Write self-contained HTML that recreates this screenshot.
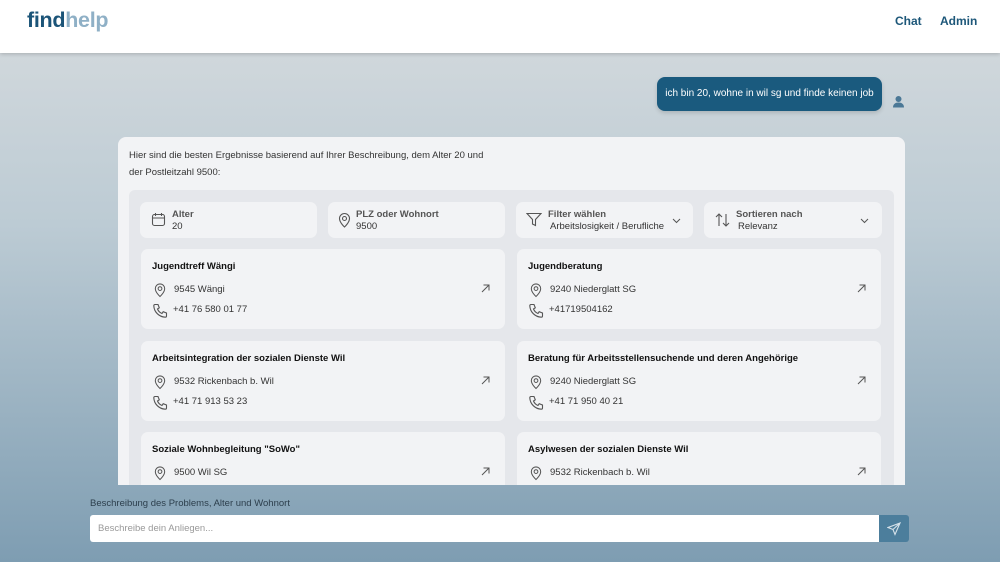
<!DOCTYPE html>
<html><head><meta charset="utf-8"><style>
*{box-sizing:border-box;margin:0;padding:0}
body{width:1000px;height:562px;overflow:hidden;font-family:"Liberation Sans",sans-serif;background:linear-gradient(#d6dbde 0%,#bccbd4 40%,#7e9db2 100%);position:relative}
.hdr{position:absolute;left:0;top:0;width:1000px;height:53px;background:#fff;box-shadow:0 1px 4px rgba(0,0,0,.2)}
.logo{position:absolute;left:27px;top:8px;font-size:21.5px;font-weight:bold;letter-spacing:-.3px}
.nav{position:absolute;top:14px;font-size:12px;font-weight:bold;color:#1d5779}
.bubble{position:absolute;left:657px;top:77px;width:225px;height:34px;background:#1a5a7e;border-radius:8px;color:#fff;font-size:10px;line-height:34px;text-align:center;box-shadow:0 2px 4px rgba(0,0,0,.15)}
.panel{position:absolute;left:118px;top:137px;width:787px;height:348px;background:#f2f3f5;border-radius:8px 8px 0 0;overflow:hidden}
.intro{position:absolute;left:11px;top:10px;font-size:9.5px;line-height:17px;color:#333}
.inner{position:absolute;left:11px;top:53px;width:765px;height:300px;background:#e5e7eb;border-radius:6px}
.f{position:absolute;top:12px;height:36px;background:#f2f3f5;border-radius:7px}
.f .l{position:absolute;left:32px;top:7px;font-size:9.5px;font-weight:bold;color:#555}
.f .v{position:absolute;left:32px;top:19px;font-size:9.5px;color:#333}
.f svg{position:absolute}
.c{position:absolute;width:364px;height:80px;background:#f2f3f5;border-radius:7px}
.c .t{position:absolute;left:11px;top:12px;font-size:9.5px;font-weight:bold;color:#111}
.c .a{position:absolute;left:33px;top:35px;font-size:9.5px;color:#333}
.c .p{position:absolute;left:32px;top:55px;font-size:9.5px;color:#333}
.c svg{position:absolute}
.lbl{position:absolute;left:90px;top:498px;font-size:9.5px;color:#2c3e4c}
.inp{position:absolute;left:90px;top:515px;width:789px;height:27px;background:#fff;border-radius:3px 0 0 3px;font-size:9.5px;color:#999;padding:8px 8px}
.send{position:absolute;left:879px;top:515px;width:30px;height:27px;background:#4c7e9c;border-radius:0 3px 3px 0}
</style></head><body>
<div class="hdr">
<div class="logo"><span style="color:#1b5478">find</span><span style="color:#8fb0c6">help</span></div>
<div class="nav" style="left:895px">Chat</div>
<div class="nav" style="left:940px">Admin</div>
</div>
<div class="bubble">ich bin 20, wohne in wil sg und finde keinen job</div>
<svg style="position:absolute;left:892px;top:95px" width="13" height="13" viewBox="0 0 13 13"><circle cx="6.5" cy="4" r="3" fill="#4b7896"/><path d="M1 12.5c0-3.5 2.5-5 5.5-5s5.5 1.5 5.5 5z" fill="#4b7896"/></svg>
<div class="panel">
<div class="intro">Hier sind die besten Ergebnisse basierend auf Ihrer Beschreibung, dem Alter 20 und<br>der Postleitzahl 9500:</div>
<div class="inner">
<div class="f" style="left:11px;width:177px"><svg style="left:11px;top:10px" width="15" height="15" viewBox="0 0 15 15" fill="none" stroke="#555" stroke-width="1.1"><rect x="1.5" y="2.5" width="12" height="11" rx="2"/><path d="M1.5 6h12M4.5 1v3M10.5 1v3"/></svg><div class="l">Alter</div><div class="v">20</div></div>
<div class="f" style="left:199px;width:177px"><svg style="left:9px;top:10px" width="15" height="16" viewBox="0 0 15 16" fill="none" stroke="#555" stroke-width="1.1"><path d="M7.5 15s5-4.5 5-8.5a5 5 0 0 0-10 0c0 4 5 8.5 5 8.5z"/><circle cx="7.5" cy="6.5" r="2"/></svg><div class="l" style="left:28px">PLZ oder Wohnort</div><div class="v" style="left:28px">9500</div></div>
<div class="f" style="left:387px;width:177px"><svg style="left:10px;top:10px" width="16" height="15" viewBox="0 0 16 15" fill="none" stroke="#555" stroke-width="1.1"><path d="M1 1.5h14l-5.5 6v6l-3-1.5v-4.5z"/></svg><div class="l">Filter wählen</div><div class="v" style="left:34px">Arbeitslosigkeit / Berufliche</div><svg style="left:156px;top:16px" width="9" height="6" viewBox="0 0 9 6" fill="none" stroke="#555"><path d="M1 1l3.5 3.5L8 1"/></svg></div>
<div class="f" style="left:575px;width:178px"><svg style="left:11px;top:11px" width="15" height="14" viewBox="0 0 15 14" fill="none" stroke="#555" stroke-width="1.1"><path d="M4 13V1M1 4l3-3 3 3M11 1v12M8 10l3 3 3-3"/></svg><div class="l">Sortieren nach</div><div class="v" style="left:34px">Relevanz</div><svg style="left:156px;top:16px" width="9" height="6" viewBox="0 0 9 6" fill="none" stroke="#555"><path d="M1 1l3.5 3.5L8 1"/></svg></div>

<div class="c" style="left:12px;top:59px"><div class="t">Jugendtreff Wängi</div><svg style="left:12px;top:33px" width="14" height="16" viewBox="0 0 15 16" fill="none" stroke="#555" stroke-width="1.1"><path d="M7.5 15s5-4.5 5-8.5a5 5 0 0 0-10 0c0 4 5 8.5 5 8.5z"/><circle cx="7.5" cy="6.5" r="2"/></svg><div class="a">9545 Wängi</div><svg style="left:12px;top:54px" width="15" height="15" viewBox="0 0 15 15" fill="none" stroke="#555" stroke-width="1.1"><path d="M2 1.5h3l1.3 3.3-1.8 1.2a8 8 0 0 0 4.5 4.5l1.2-1.8 3.3 1.3v3c0 .7-.6 1.2-1.3 1.2A12 12 0 0 1 .8 2.8c0-.7.5-1.3 1.2-1.3z"/></svg><div class="p">+41 76 580 01 77</div><svg style="left:340px;top:35px" width="9" height="9" viewBox="0 0 9 9" fill="none" stroke="#555"><path d="M1 8l7-7M2.5 1H8v5.5"/></svg></div>
<div class="c" style="left:388px;top:59px"><div class="t">Jugendberatung</div><svg style="left:12px;top:33px" width="14" height="16" viewBox="0 0 15 16" fill="none" stroke="#555" stroke-width="1.1"><path d="M7.5 15s5-4.5 5-8.5a5 5 0 0 0-10 0c0 4 5 8.5 5 8.5z"/><circle cx="7.5" cy="6.5" r="2"/></svg><div class="a">9240 Niederglatt SG</div><svg style="left:12px;top:54px" width="15" height="15" viewBox="0 0 15 15" fill="none" stroke="#555" stroke-width="1.1"><path d="M2 1.5h3l1.3 3.3-1.8 1.2a8 8 0 0 0 4.5 4.5l1.2-1.8 3.3 1.3v3c0 .7-.6 1.2-1.3 1.2A12 12 0 0 1 .8 2.8c0-.7.5-1.3 1.2-1.3z"/></svg><div class="p">+41719504162</div><svg style="left:340px;top:35px" width="9" height="9" viewBox="0 0 9 9" fill="none" stroke="#555"><path d="M1 8l7-7M2.5 1H8v5.5"/></svg></div>

<div class="c" style="left:12px;top:151px"><div class="t">Arbeitsintegration der sozialen Dienste Wil</div><svg style="left:12px;top:33px" width="14" height="16" viewBox="0 0 15 16" fill="none" stroke="#555" stroke-width="1.1"><path d="M7.5 15s5-4.5 5-8.5a5 5 0 0 0-10 0c0 4 5 8.5 5 8.5z"/><circle cx="7.5" cy="6.5" r="2"/></svg><div class="a">9532 Rickenbach b. Wil</div><svg style="left:12px;top:54px" width="15" height="15" viewBox="0 0 15 15" fill="none" stroke="#555" stroke-width="1.1"><path d="M2 1.5h3l1.3 3.3-1.8 1.2a8 8 0 0 0 4.5 4.5l1.2-1.8 3.3 1.3v3c0 .7-.6 1.2-1.3 1.2A12 12 0 0 1 .8 2.8c0-.7.5-1.3 1.2-1.3z"/></svg><div class="p">+41 71 913 53 23</div><svg style="left:340px;top:35px" width="9" height="9" viewBox="0 0 9 9" fill="none" stroke="#555"><path d="M1 8l7-7M2.5 1H8v5.5"/></svg></div>
<div class="c" style="left:388px;top:151px"><div class="t">Beratung für Arbeitsstellensuchende und deren Angehörige</div><svg style="left:12px;top:33px" width="14" height="16" viewBox="0 0 15 16" fill="none" stroke="#555" stroke-width="1.1"><path d="M7.5 15s5-4.5 5-8.5a5 5 0 0 0-10 0c0 4 5 8.5 5 8.5z"/><circle cx="7.5" cy="6.5" r="2"/></svg><div class="a">9240 Niederglatt SG</div><svg style="left:12px;top:54px" width="15" height="15" viewBox="0 0 15 15" fill="none" stroke="#555" stroke-width="1.1"><path d="M2 1.5h3l1.3 3.3-1.8 1.2a8 8 0 0 0 4.5 4.5l1.2-1.8 3.3 1.3v3c0 .7-.6 1.2-1.3 1.2A12 12 0 0 1 .8 2.8c0-.7.5-1.3 1.2-1.3z"/></svg><div class="p">+41 71 950 40 21</div><svg style="left:340px;top:35px" width="9" height="9" viewBox="0 0 9 9" fill="none" stroke="#555"><path d="M1 8l7-7M2.5 1H8v5.5"/></svg></div>

<div class="c" style="left:12px;top:242px"><div class="t">Soziale Wohnbegleitung "SoWo"</div><svg style="left:12px;top:33px" width="14" height="16" viewBox="0 0 15 16" fill="none" stroke="#555" stroke-width="1.1"><path d="M7.5 15s5-4.5 5-8.5a5 5 0 0 0-10 0c0 4 5 8.5 5 8.5z"/><circle cx="7.5" cy="6.5" r="2"/></svg><div class="a">9500 Wil SG</div><svg style="left:340px;top:35px" width="9" height="9" viewBox="0 0 9 9" fill="none" stroke="#555"><path d="M1 8l7-7M2.5 1H8v5.5"/></svg></div>
<div class="c" style="left:388px;top:242px"><div class="t">Asylwesen der sozialen Dienste Wil</div><svg style="left:12px;top:33px" width="14" height="16" viewBox="0 0 15 16" fill="none" stroke="#555" stroke-width="1.1"><path d="M7.5 15s5-4.5 5-8.5a5 5 0 0 0-10 0c0 4 5 8.5 5 8.5z"/><circle cx="7.5" cy="6.5" r="2"/></svg><div class="a">9532 Rickenbach b. Wil</div><svg style="left:340px;top:35px" width="9" height="9" viewBox="0 0 9 9" fill="none" stroke="#555"><path d="M1 8l7-7M2.5 1H8v5.5"/></svg></div>
</div>
</div>
<div class="lbl">Beschreibung des Problems, Alter und Wohnort</div>
<div class="inp">Beschreibe dein Anliegen...</div>
<div class="send"><svg style="position:absolute;left:8px;top:7px" width="14" height="14" viewBox="0 0 14 14" fill="none" stroke="#d6e2ea" stroke-width="1.1"><path d="M13 1L1 5.5l5 2 2 5z M13 1L6 7.5"/></svg></div>
</body></html>
